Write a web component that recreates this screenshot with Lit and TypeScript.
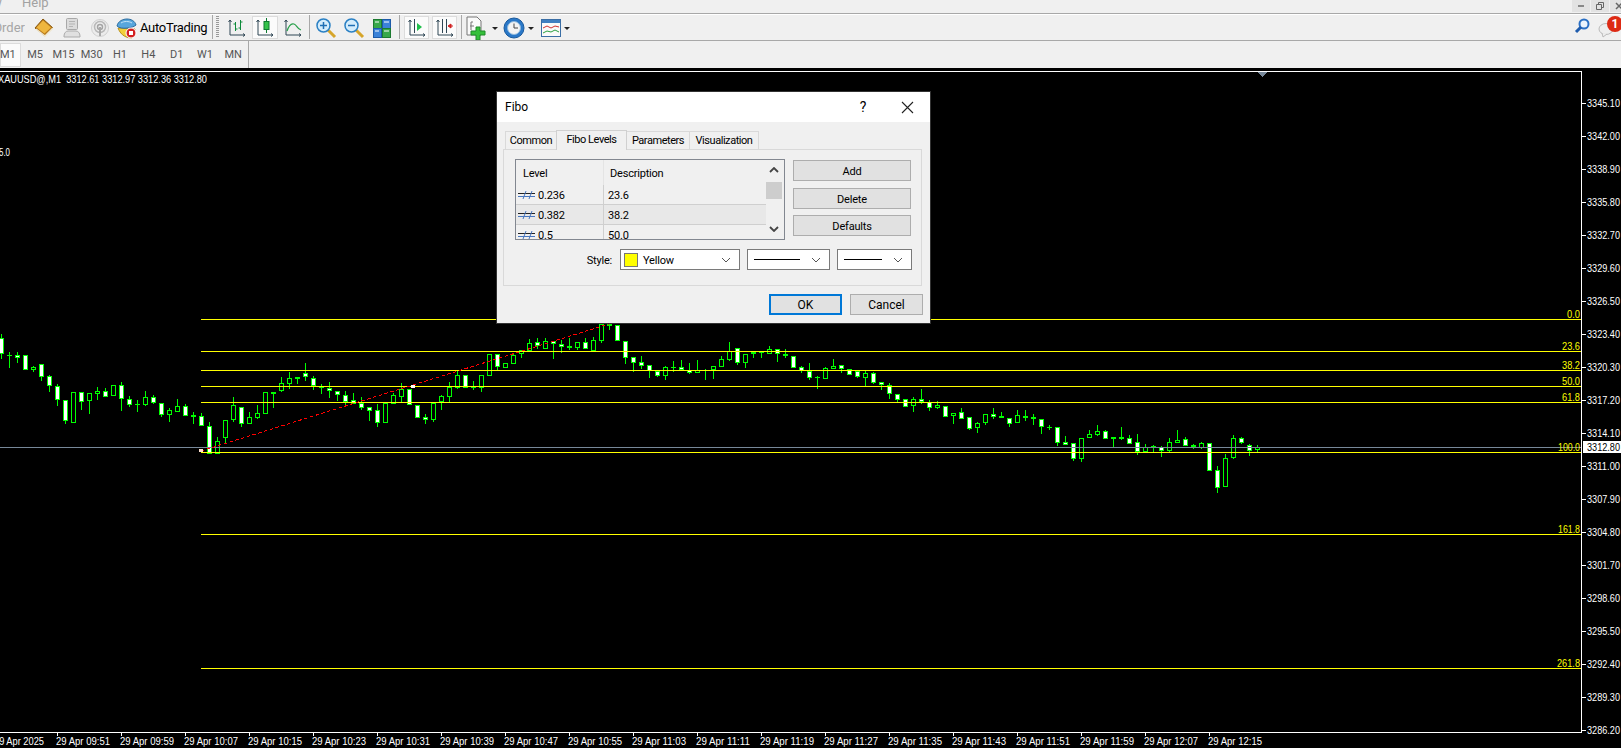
import { LitElement, html, css, svg, nothing } from "lit";
import { customElement } from "lit/decorators.js";

// candle type: w = white body, h = hollow, f = filled green
type C = [string, number, number, number?, number?];
const groups: { base: number; start: number; items: C[] }[] = [
  { base: 310, start: 0, items: [
    ["w",82,130,70,143],["f",131,133,124,170],["w",133,140,124,155],["w",133,176],["h",169,178,166,182],
    ["w",160,197,160,209],["w",196,226,193,242],["w",226,268,220,284],["w",268,329,268,338],["h",244,335],
    ["w",244,272,244,296],["h",247,269,247,308],["h",241,248,228,266],["w",241,257,232,257],["h",223,254],
    ["w",223,263,213,299],["w",265,281,256,287],["f",279,281,267,302],["h",259,281,240,284],["w",259,275,252,278],
    ["w",277,311,277,317],["h",298,311,291,332],["h",286,302,264,302],["w",286,314,279,314],["w",313,319,304,338],
    ["w",316,344,306,344],["w",346,429,333,429],["h",391,429,378,429],["h",328,380,328,400],["h",283,326,258,332],
    ["w",289,338,289,347],["h",319,338,304,338],["h",307,320,282,323],["h",244,308],["f",244,248,244,291],
    ["h",217,239,198,242],["h",202,218,183,233],["f",198,203,198,218],["w",187,197,156,209],["w",202,226,195,236],
    ["f",227,230,220,249],["w",232,239,213,261],["w",241,251,241,270],["w",253,274,240,282],["w",268,278,247,278],
    ["w",277,290,259,296],["w",289,299,289,330],["w",298,335,280,347],["h",277,335],["h",253,278,245,278],
  ]},
  { base: 300, start: 50, items: [
    ["h",265,287,247,304],["w",265,313],["w",312,350],["w",348,356,339,368],["h",305,356,305,363],
    ["h",285,302,282,326],["h",258,287,243,304],["h",222,260,210,264],["w",223,260],["f",258,261,240,267],
    ["h",222,262,222,273],["h",160,224],["w",160,197,160,207],["h",187,200],["h",162,188,157,188],
    ["h",148,158,148,171],["h",127,150,114,150],["w",124,136,111,145],["h",121,144,111,144],["w",121,128,121,174],
    ["w",130,137,117,155],["f",136,140,111,146],["h",124,141,124,147],["w",124,143,112,143],["h",118,149,108,149],
    ["h",70,119,70,126],["w",70,76,70,87],["w",72,119],["w",121,170,121,188],["w",169,185,169,212],
    ["w",184,194,165,204],["w",193,211,193,231],["w",211,224,211,228],["h",199,224,195,237],["f",198,201,180,212],
    ["w",199,208,178,208],["w",208,215,186,219],["h",208,215,178,215],["f",207,209,205,237],["h",196,208,196,234],
    ["h",175,197,165,197],["h",151,176,124,179],["w",142,185,142,191],["h",160,185,160,201],["h",153,160,153,171],
    ["f",152,155,152,171],["h",145,158,136,158],["w",145,160,145,183],["w",160,166,144,171],["w",166,200],
  ]},
  { base: 330, start: 100, items: [
    ["w",109,121,105,125],["w",120,140,96,146],["f",137,140,135,173],["h",112,143,108,143],["h",106,113,84,113],
    ["w",103,113,103,125],["w",115,131],["w",120,137,120,140],["h",127,140,120,166],["w",127,155,123,158],
    ["w",154,163,154,176],["w",163,188,156,203],["w",190,206,190,213],["w",205,227],["h",205,224,198,242],
    ["w",205,214,174,219],["w",214,230,207,239],["h",223,230,210,234],["w",226,257],["h",247,254,247,278],
    ["w",244,263,232,263],["w",259,293,259,296],["h",276,290,273,305],["h",250,275,250,281],["w",250,257,232,263],
    ["f",256,260,243,260],["w",262,278,262,287],["h",253,275,237,275],["f",256,260,237,269],["f",259,263,250,281],
    ["w",265,287,265,308],["f",288,290,282,296],["w",289,335,289,344],["w",334,341,316,341],["w",337,383,337,389],
    ["h",322,383,322,392],["h",310,320,298,320],["h",301,311,282,314],["w",301,323,298,323],["f",319,323,319,349],
    ["f",319,323,289,326],["w",322,338,313,338],["w",334,362,310,371],["h",349,362,340,362],["f",346,349,343,364],
    ["w",349,359,346,377],["h",334,359,322,362],["h",328,335,298,335],["w",325,344,319,344],["w",343,349,340,353],
    ["h",337,350,334,353],["w",337,419],
  ]},
  { base: 420, start: 152, items: [
    ["w",148,200,135,216],["h",112,197,99,197],["h",52,110,42,114],["w",52,65,48,69],["w",73,90,70,105],["h",78,87,72,93],
  ]},
];

const GREEN = "#00ff00";
const candles = groups.flatMap((g) =>
  g.items.map((c, i) => {
    const x = 1 + 8 * (g.start + i);
    const y = (v: number) => Math.round(g.base + v / 3);
    const top = y(c[1]);
    const bot = Math.max(y(c[2]), top + 1);
    const wt = c[3] !== undefined ? y(c[3]) : top;
    const wb = c[4] !== undefined ? y(c[4]) : bot;
    const fill = c[0] === "w" ? "#ffffff" : c[0] === "h" ? "#000000" : GREEN;
    return svg`<rect x=${x} y=${wt} width="1" height=${wb - wt} fill=${GREEN}></rect>
      <rect x=${x - 2} y=${top} width="5" height=${bot - top} fill=${GREEN}></rect>
      ${bot - top > 2 ? svg`<rect x=${x - 1} y=${top + 1} width="3" height=${bot - top - 2} fill=${fill}></rect>` : nothing}`;
  })
);

const fibs: [number, string, number][] = [
  [318, "0.0", 13], [350, "23.6", 18], [369, "38.2", 18], [385, "50.0", 18],
  [401, "61.8", 18], [451, "100.0", 22], [533, "161.8", 22], [667, "261.8", 23],
];

const prices = Array.from({ length: 20 }, (_, k) => ({ y: 103 + 33 * k, t: (3345.1 - 3.1 * k).toFixed(2) }));

const times: string[] = [];
for (let m = 9 * 60 + 51; m <= 12 * 60 + 15; m += 8) {
  const h = String(Math.floor(m / 60)).padStart(2, "0");
  const mm = String(m % 60).padStart(2, "0");
  times.push(`29 Apr ${h}:${mm}`);
}

const axes = (c = "#2f4654") => svg`<path d="M4 3v15h15M2.500 5L4 3l1.500 2M17 16.500l2 1.500-2 1.500" fill="none" stroke=${c} stroke-width="1"></path>`;

const icons: Record<string, unknown> = {
  diamond: svg`<svg width="20" height="20" viewBox="0 0 20 20"><path d="M9 1l10 9-8 8-10-8z" fill="#b9791a" stroke="#8a5a10"></path><path d="M9 2.500l8 7-6.500 6-8-6z" fill="#eeb63f"></path><path d="M2 11l9 7 8-8" fill="none" stroke="#efe7cf" stroke-width="1.500"></path></svg>`,
  person: svg`<svg width="20" height="22" viewBox="0 0 20 22"><rect x="4.500" y="1.500" width="11" height="11" rx="1" fill="#dcdcdc" stroke="#a8a8a8"></rect><path d="M7 4.500h6M7 7h6M7 9.500h4" stroke="#b4b4b4"></path><path d="M2 19c0-3 2-5 4-5h8c2 0 4 2 4 5v1H2z" fill="#e0e0e0" stroke="#ababab"></path></svg>`,
  signal: svg`<svg width="20" height="20" viewBox="0 0 20 20"><circle cx="10" cy="10" r="8.500" fill="#ececec" stroke="#d0d0d0"></circle><circle cx="10" cy="9" r="5.500" fill="none" stroke="#b8b8b8" stroke-width="1.500"></circle><circle cx="10" cy="9" r="2.500" fill="none" stroke="#a4a4a4" stroke-width="1.500"></circle><path d="M9 9h2v9H9z" fill="#a8a8a8"></path></svg>`,
  auto: svg`<svg width="22" height="22" viewBox="0 0 22 22"><path d="M2 11c3 8 9 10 14 10l3-9z" fill="#f2cf3a" stroke="#b9901a"></path><path d="M1 9c1-5 6-7 10-7s8 2 9 6c-3 3-15 5-19 1z" fill="#58a6dc" stroke="#2c6c9e"></path><path d="M5 6c3-2 8-2 11 0" stroke="#c6e4f7" fill="none"></path><circle cx="15" cy="16" r="5" fill="#d32020" stroke="#fff"></circle><rect x="13" y="14" width="4" height="4" fill="#fff"></rect></svg>`,
  bars: svg`<svg width="22" height="22" viewBox="0 0 22 22">${axes()}<path d="M9.500 5v9M7.500 7h2M9.500 12h2M14.500 3v10M12.500 11h2M14.500 5h2" stroke="#0c8a3a" fill="none"></path></svg>`,
  candle: svg`<svg width="22" height="22" viewBox="0 0 22 22">${axes()}<path d="M12.500 1v15" stroke="#0c7a30"></path><rect x="10" y="4.500" width="5" height="8" fill="#35c24a" stroke="#0c7a30"></rect></svg>`,
  line: svg`<svg width="22" height="22" viewBox="0 0 22 22">${axes()}<path d="M5 14c2-6 4-8 7-7s3 5 7 6" fill="none" stroke="#27a04a" stroke-width="1.200"></path></svg>`,
  zin: svg`<svg width="22" height="22" viewBox="0 0 22 22"><path d="M13 13l7 7" stroke="#d6a52a" stroke-width="3"></path><circle cx="8.500" cy="8.500" r="6.500" fill="#d4ecfb" stroke="#2a80c4" stroke-width="1.500"></circle><path d="M5 8.500h7M8.500 5v7" stroke="#1f6fb4" stroke-width="1.500"></path></svg>`,
  zout: svg`<svg width="22" height="22" viewBox="0 0 22 22"><path d="M13 13l7 7" stroke="#d6a52a" stroke-width="3"></path><circle cx="8.500" cy="8.500" r="6.500" fill="#d4ecfb" stroke="#2a80c4" stroke-width="1.500"></circle><path d="M5 8.500h7" stroke="#1f6fb4" stroke-width="1.500"></path></svg>`,
  tile: svg`<svg width="18" height="19" viewBox="0 0 18 19"><rect x="0.500" y="0.500" width="8" height="9" fill="#37a84a" stroke="#1c7a30"></rect><rect x="9.500" y="0.500" width="8" height="9" fill="#3b82d8" stroke="#1c5aa8"></rect><rect x="0.500" y="9.500" width="8" height="9" fill="#3b82d8" stroke="#1c5aa8"></rect><rect x="9.500" y="9.500" width="8" height="9" fill="#37a84a" stroke="#1c7a30"></rect><path d="M2 3h4M11 3h5M2 12h4M11 12h5" stroke="#fff"></path></svg>`,
  shift: svg`<svg width="22" height="22" viewBox="0 0 22 22">${axes()}<path d="M8.500 2v14" stroke="#2f4654"></path><path d="M11 6l5 4-5 4z" fill="#1fbf4a"></path></svg>`,
  scroll: svg`<svg width="22" height="22" viewBox="0 0 22 22">${axes()}<path d="M8.500 2v14M12.500 2v14" stroke="#2f4654"></path><path d="M19 9h-3M14 9l3-2v4z" fill="#d02020" stroke="#d02020"></path></svg>`,
  newc: svg`<svg width="24" height="24" viewBox="0 0 24 24"><path d="M2 1h10l4 4v14H2z" fill="#fafafa" stroke="#777"></path><path d="M6 6h2M5 10h4M6 6v8" stroke="#777" fill="none"></path><path d="M11 11h4v4h5v4h-5v5h-4v-5H6v-4h5z" fill="#35c03a" stroke="#1f8a28"></path></svg>`,
  clock: svg`<svg width="22" height="22" viewBox="0 0 22 22"><circle cx="11" cy="11" r="10" fill="#2a78c8" stroke="#1a5a9c"></circle><circle cx="11" cy="11" r="6.500" fill="#f4f4f4" stroke="#8fb9dd"></circle><path d="M11 6.500V11h4" stroke="#444" fill="none"></path></svg>`,
  tpl: svg`<svg width="20" height="20" viewBox="0 0 20 20"><rect x="0.500" y="1.500" width="19" height="17" fill="#fafafa" stroke="#3a6ea5"></rect><rect x="1" y="2" width="18" height="3" fill="#3f7fc1"></rect><path d="M2 10l4-2 4 2 4-2 4 1" stroke="#d03030" fill="none"></path><path d="M2 15l4-2 4 1 4-2 4 2" stroke="#2aa040" fill="none"></path></svg>`,
};

type Item = { w: number; k: string; icon?: string; caret?: boolean; on?: boolean; text?: string };
const tools: Item[] = [
  { w: 25, k: "ordertxt", text: "Order" }, { w: 5, k: "sp" },
  { w: 28, k: "i", icon: "diamond" }, { w: 28, k: "i", icon: "person" }, { w: 28, k: "i", icon: "signal" }, { w: 26, k: "i", icon: "auto" },
  { w: 72, k: "autotxt", text: "AutoTrading" }, { w: 1, k: "sep" }, { w: 3, k: "sp" }, { w: 3, k: "grip" }, { w: 5, k: "sp" },
  { w: 26, k: "i", icon: "bars" }, { w: 2, k: "sp" }, { w: 26, k: "i", icon: "candle", on: true }, { w: 2, k: "sp" }, { w: 26, k: "i", icon: "line" },
  { w: 3, k: "sp" }, { w: 1, k: "sep" }, { w: 3, k: "sp" },
  { w: 26, k: "i", icon: "zin" }, { w: 2, k: "sp" }, { w: 26, k: "i", icon: "zout" }, { w: 2, k: "sp" }, { w: 26, k: "i", icon: "tile" },
  { w: 4, k: "sp" }, { w: 1, k: "sep" }, { w: 4, k: "sp" },
  { w: 25, k: "i", icon: "shift", on: true }, { w: 3, k: "sp" }, { w: 25, k: "i", icon: "scroll", on: true },
  { w: 4, k: "sp" }, { w: 1, k: "sep" }, { w: 3, k: "sp" },
  { w: 33, k: "i", icon: "newc", caret: true }, { w: 3, k: "sp" }, { w: 34, k: "i", icon: "clock", caret: true }, { w: 3, k: "sp" }, { w: 35, k: "i", icon: "tpl", caret: true },
];

const frames = ["M1", "M5", "M15", "M30", "H1", "H4", "D1", "W1", "MN"];

const lineGlyph = html`<svg class="lg" width="17" height="12" viewBox="0 0 17 12"><path d="M0 4.500h17" stroke="#222"></path><path d="M0 7.500h17" stroke="#4a78c0"></path><path d="M8 2L5 10M14 2l-3 8" stroke="#4a78c0" fill="none"></path></svg>`;
const chev = html`<svg class="chev" width="10" height="6" viewBox="0 0 10 6"><path d="M1 1l4 4 4-4" fill="none" stroke="#555"></path></svg>`;
const chevB = html`<svg class="chev" width="10" height="6" viewBox="0 0 10 6"><path d="M1 1l4 4 4-4" fill="none" stroke="#444" stroke-width="1.800"></path></svg>`;

@customElement("app-root")
export class AppRoot extends LitElement {
  static styles = css`
    :host { display: block; width: 1621px; height: 748px; overflow: hidden; position: relative; background: #000; font-family: Roboto, "Liberation Sans", Arial, sans-serif; }
    .top { background: #f0f0f0; height: 68px; display: flex; flex-direction: column; }
    .menu { height: 13px; flex: none; display: flex; align-items: flex-end; color: #a2a2a2; font-size: 13px; overflow: hidden; position: relative; border-bottom: 1px solid #a8a8a8; box-shadow: 0 1px 0 #fff; box-sizing: content-box; }
    .menu span { line-height: 13px; transform: translateY(-4px); }
    .menu .v { width: 22px; margin-left: -8px; flex: none; }
    .menu .v + span { margin-left: 8px; }
    .win { position: absolute; right: -7px; top: 0; display: flex; gap: 1px; }
    .win b { width: 18px; height: 12px; background: #e2e2e2; display: flex; align-items: center; justify-content: center; }
    .row { display: flex; align-items: center; height: 26px; position: relative; flex: none; }
    .row1 { border-bottom: 1px solid #a8a8a8; }
    .tool { display: flex; align-items: center; justify-content: center; height: 23px; gap: 3px; flex: none; }
    .tool svg, .tool .caret { transform: translateY(1px); }
    .tool.on { background: #fbfbfb; box-shadow: inset 0 0 0 1px #dcdcdc; }
    .sep { background: #a8a8a8; height: 24px; }
    .grip { height: 22px; background: repeating-linear-gradient(#999 0 1px, transparent 1px 2px); }
    .ordertxt { color: #a6a6a6; font-size: 13px; justify-content: flex-end; overflow: hidden; white-space: nowrap; }
    .autotxt { color: #000; font-size: 13px; justify-content: flex-start; white-space: nowrap; letter-spacing: -0.3px; }
    .caret { width: 0; height: 0; border-left: 3px solid transparent; border-right: 3px solid transparent; border-top: 3px solid #222; margin-top: 1px; }
    .right { position: absolute; right: 0; top: -1px; height: 27px; width: 60px; }
    .search { position: absolute; left: 13px; top: 5px; }
    .bubble { position: absolute; left: 37px; top: 9px; }
    .badge { position: absolute; left: 46px; top: 3px; width: 16px; height: 16px; border-radius: 50%; background: #dd2a14; color: #fff; font-size: 12px; font-weight: 700; display: flex; align-items: center; justify-content: center; }
    .row2 { height: 27px; color: #555; font-size: 11px; }
    .tf { width: 28.300px; text-align: center; flex: none; line-height: 24px; height: 24px; }
    .tf.first { width: 21px; padding-right: 7px; box-sizing: border-box; background: #fbfbfb; box-shadow: inset 0 0 0 1px #dcdcdc; }
    .row2 .sep { width: 1px; height: 27px; margin-left: 1px; }
    .chart { display: block; width: 1621px; height: 680px; background: #000; }
    .chart text { font-family: "Liberation Sans", Arial, sans-serif; font-size: 11px; fill: #fff; white-space: pre; }
    .chart text.fib { fill: #ffff00; }
    .chart text.cur { fill: #000; }

    .dlg { position: absolute; left: 497px; top: 92px; width: 433px; height: 231px; background: #f0f0f0; box-shadow: 0 0 0 1px #333; color: #000; font-size: 11px; letter-spacing: -0.2px; display: flex; flex-direction: column; }
    .title { height: 30px; background: #fff; display: flex; align-items: center; padding-left: 8px; font-size: 12px; letter-spacing: 0; flex: none; }
    .title .name { flex: 1; }
    .title .q { width: 12px; margin-right: 32px; font-size: 14px; text-align: center; }
    .title svg { margin-right: 16px; }
    .tabs { display: flex; margin: 7px 0 0 9px; height: 20px; align-items: flex-end; letter-spacing: -0.45px; }
    .tab { height: 17px; line-height: 18px; border: 1px solid #d9d9d9; border-bottom: none; text-align: center; box-sizing: content-box; margin-left: -1px; flex: none; }
    .tab.on { height: 19px; line-height: 17px; background: #f0f0f0; position: relative; z-index: 2; margin-bottom: -1px; border-color: #d0d0d0; }
    .t1 { width: 50px; } .t2 { width: 69px; } .t3 { width: 62px; } .t4 { width: 68px; }
    .pane { margin-left: 6px; width: 419px; height: 137px; border: 1px solid #d9d9d9; box-sizing: border-box; padding: 9px 9px 0 11px; flex: none; }
    .upper { display: flex; gap: 8px; align-items: flex-start; }
    .list { width: 270px; height: 81px; border: 1px solid #828790; box-sizing: border-box; background: #f0f0f0; display: flex; overflow: hidden; }
    .grid { flex: 1; min-width: 0; }
    .cells { display: grid; grid-template-columns: 87px 1fr; }
    .cells > div { height: 20px; display: flex; align-items: center; border-bottom: 1px solid #cfcfcf; box-sizing: border-box; padding: 1px 0 0 2px; gap: 3px; }
    .cells > .d { border-left: 1px solid #cfcfcf; padding-left: 4px; }
    .cells > .hd { height: 25px; border-bottom: none; padding-left: 7px; padding-top: 2px; background: #f0f0f0; }
    .cells > .hd.d { border-left: 1px solid #e4e4e4; padding-left: 6px; }
    .cells > .alt { background: #e8e8e8; }
    .sb { width: 16px; margin-right: 2px; display: flex; flex-direction: column; align-items: center; padding-top: 7px; box-sizing: border-box; flex: none; }
    .sb .arrow { display: block; height: 6px; line-height: 0; }
    .thumb { width: 16px; height: 17px; background: #cdcdcd; margin-top: 9px; flex: none; }
    .up { transform: rotate(180deg); }
    .dn { margin-top: 27px; }
    .btns { display: flex; flex-direction: column; gap: 6.500px; margin-top: 1px; }
    .btn { width: 118px; height: 21px; background: #e1e1e1; border: 1px solid #adadad; box-sizing: border-box; display: flex; align-items: center; justify-content: center; padding-top: 2px; }
    .style { display: flex; justify-content: flex-end; align-items: center; gap: 7px; margin-top: 9px; }
    .style .lab { margin-right: 1px; padding-top: 2px; }
    .sel { height: 21px; background: #fff; border: 1px solid #7a7a7a; box-sizing: border-box; display: flex; align-items: center; padding: 0 8px 0 6px; flex: none; }
    .s1 { width: 120px; padding-left: 3px; gap: 5px; } .s2 { width: 83px; } .s3 { width: 75px; }
    .swatch { width: 12px; height: 12px; background: #ffff00; border: 1px solid #777; flex: none; }
    .sel .lbl { flex: 1; padding-top: 2px; }
    .sel .ln { flex: 1; height: 1px; background: #000; margin-right: 11px; }
    .foot { display: flex; justify-content: flex-end; gap: 8px; padding: 8px 7px 0 0; }
    .fb { height: 21px; width: 73px; background: #e1e1e1; border: 1px solid #adadad; box-sizing: border-box; display: flex; align-items: center; justify-content: center; font-size: 12px; letter-spacing: 0; }
    .fb.def { border: 2px solid #0078d7; }
  `;

  render() {
    return html`
      <div class="top">
        <div class="menu">
          <span class="v">w</span><span>Help</span>
          <div class="win">
            <b><svg width="8" height="4" viewBox="0 0 8 4"><path d="M1 2h6" stroke="#888" stroke-width="2"></path></svg></b>
            <b><svg width="10" height="10" viewBox="0 0 10 10"><path d="M1.500 3.500h5v5h-5zM3.500 3V1.500h5v5H7" fill="none" stroke="#666"></path></svg></b>
            <b><svg width="8" height="8" viewBox="0 0 8 8"><path d="M1 1l6 6M7 1L1 7" stroke="#666" stroke-width="1.500"></path></svg></b>
          </div>
        </div>
        <div class="row row1">
          ${tools.map((t) => html`<div class="tool ${t.k} ${t.on ? "on" : ""}" style="width:${t.w}px">
            ${t.text ?? nothing}${t.icon ? icons[t.icon] : nothing}${t.caret ? html`<span class="caret"></span>` : nothing}
          </div>`)}
          <div class="right">
            <svg class="search" width="16" height="16" viewBox="0 0 16 16"><circle cx="10" cy="6" r="4.500" fill="#eaf3fc" stroke="#2a6fc4" stroke-width="2"></circle><path d="M7 9l-5 5" stroke="#1f5cad" stroke-width="3"></path></svg>
            <svg class="bubble" width="18" height="16" viewBox="0 0 18 16"><ellipse cx="8" cy="7" rx="7" ry="5.500" fill="#eee" stroke="#bbb"></ellipse><path d="M4 11l1 4 4-3" fill="#eee" stroke="#bbb"></path></svg>
            <span class="badge">1</span>
          </div>
        </div>
        <div class="row row2">
          ${frames.map((f, i) => html`<div class="tf ${i === 0 ? "first" : ""}">${f}</div>`)}
          <div class="sep"></div>
        </div>
      </div>
      ${this.chart()}
      ${this.dialog()}
    `;
  }

  chart() {
    return html`<svg class="chart" width="1621" height="680" viewBox="0 68 1621 680" shape-rendering="crispEdges">
      <text x="-2" y="83" textLength="209" lengthAdjust="spacingAndGlyphs">XAUUSD@,M1  3312.61 3312.97 3312.36 3312.80</text>
      <text x="-1" y="156" textLength="11" lengthAdjust="spacingAndGlyphs">5.0</text>
      <g transform="translate(0 1)">
        ${candles}
        <rect x="0" y="446" width="1582" height="1" fill="#778899"></rect>
        ${fibs.map(([y]) => svg`<rect x="201" y=${y} width="1381" height="1" fill="#ffff00"></rect>`)}
        <line x1="201" y1="450" x2="612" y2="322" stroke="#ff0000" stroke-width="1" stroke-dasharray="3.500 2.500"></line>
        <rect x="199" y="448" width="4" height="3" fill="#ffe0d0"></rect>
        <rect x="411" y="384" width="4" height="3" fill="#ffffff"></rect>
        ${fibs.map(([y, t, w]) => svg`<text class="fib" x=${1580 - w} y=${y - 1} textLength=${w} lengthAdjust="spacingAndGlyphs">${t}</text>`)}
      </g>
      <rect x="0" y="71" width="1582" height="1" fill="#fff"></rect>
      <rect x="0" y="732" width="1582" height="1" fill="#fff"></rect>
      <rect x="1581" y="71" width="1" height="662" fill="#fff"></rect>
      <path d="M1257 72h10l-5 5z" fill="#778899"></path>
      ${prices.map((p) => svg`<rect x="1582" y=${p.y} width="4" height="1" fill="#fff"></rect>
        <text x="1587" y=${p.y + 4} textLength="33" lengthAdjust="spacingAndGlyphs">${p.t}</text>`)}
      <rect x="1583" y="441" width="38" height="12" fill="#fff"></rect>
      <text class="cur" x="1587" y="451" textLength="33" lengthAdjust="spacingAndGlyphs">3312.80</text>
      <rect x="-7" y="733" width="1" height="3" fill="#fff"></rect>
      <text x="-6" y="745" textLength="50" lengthAdjust="spacingAndGlyphs">29 Apr 2025</text>
      ${times.map((t, k) => svg`<rect x=${57 + 64 * k} y="733" width="1" height="3" fill="#fff"></rect>
        <text x=${56 + 64 * k} y="745" textLength="54" lengthAdjust="spacingAndGlyphs">${t}</text>`)}
    </svg>`;
  }

  dialog() {
    const rows = [["0.236", "23.6", false], ["0.382", "38.2", true], ["0.5", "50.0", false]] as [string, string, boolean][];
    return html`<div class="dlg">
      <div class="title">
        <span class="name">Fibo</span><span class="q">?</span>
        <svg width="13" height="13" viewBox="0 0 13 13"><path d="M1 1l11 11M12 1L1 12" stroke="#222" stroke-width="1.100"></path></svg>
      </div>
      <div class="tabs">
        <div class="tab t1">Common</div><div class="tab on t2">Fibo Levels</div><div class="tab t3">Parameters</div><div class="tab t4">Visualization</div>
      </div>
      <div class="pane">
        <div class="upper">
          <div class="list">
            <div class="grid"><div class="cells">
              <div class="hd">Level</div><div class="hd d">Description</div>
              ${rows.map(([a, b, alt]) => html`<div class="${alt ? "alt" : ""}">${lineGlyph}${a}</div><div class="d ${alt ? "alt" : ""}">${b}</div>`)}
            </div></div>
            <div class="sb">
              <span class="arrow up">${chevB}</span>
              <div class="thumb"></div>
              <span class="arrow dn">${chevB}</span>
            </div>
          </div>
          <div class="btns">
            <div class="btn">Add</div><div class="btn">Delete</div><div class="btn">Defaults</div>
          </div>
        </div>
        <div class="style">
          <span class="lab">Style:</span>
          <div class="sel s1"><span class="swatch"></span><span class="lbl">Yellow</span>${chev}</div>
          <div class="sel s2"><span class="ln"></span>${chev}</div>
          <div class="sel s3"><span class="ln"></span>${chev}</div>
        </div>
      </div>
      <div class="foot"><div class="fb def">OK</div><div class="fb">Cancel</div></div>
    </div>`;
  }
}
